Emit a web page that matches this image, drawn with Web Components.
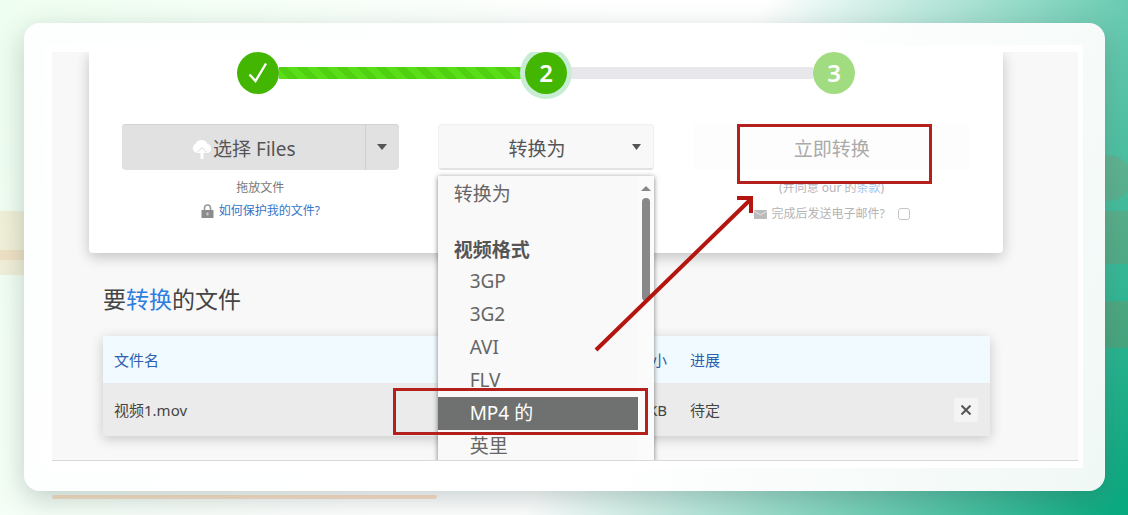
<!DOCTYPE html>
<html lang="zh-CN">
<head>
<meta charset="utf-8">
<title>文件转换</title>
<style>
html, body { margin: 0; min-height: 100%; }
body { font-family: "Noto Sans", "Noto Sans CJK SC", sans-serif; color: #444; }
</style>
</head>
<body>
<page-backdrop>
  <screen-card>
    <convert-panel>
      <step-track slot="steps"></step-track>
      <file-picker></file-picker>
      <format-picker></format-picker>
      <convert-action></convert-action>
    </convert-panel>
    <file-list></file-list>
  </screen-card>
</page-backdrop>
<script>
const define = (name, html) => customElements.define(name, class extends HTMLElement {
  constructor() {
    super();
    this.attachShadow({ mode: "open" }).innerHTML = html;
  }
});

define("page-backdrop", `
<style>
:host {
  display: block; box-sizing: border-box; min-height: 100vh; padding: 23px 23px 23px 24px; position: relative; overflow: hidden;
  background: linear-gradient(115deg, #eefef0 0%, #fff 45%, #fff 56%, #05a87d 100%);
}
.deco { position: absolute; }
.left { left: 0; top: 211px; width: 32px; height: 64px; background: linear-gradient(rgba(240,180,110,.2) 39px, rgba(235,150,80,.28) 39px 49px, rgba(240,180,110,.2) 49px); }
.right { right: 0; top: 211px; width: 32px; height: 137px; background: linear-gradient(rgba(190,110,60,.18) 53px, transparent 53px 90px, rgba(190,110,60,.2) 90px); }
.disc { right: -4px; top: 155px; width: 48px; height: 46px; border-radius: 50%; background: rgba(190,110,60,.16); }
.line { left: 52px; top: 495px; width: 385px; height: 4px; background: rgba(225,160,110,.38); border-radius: 2px; z-index: 2; }
slot { position: relative; display: block; }
</style>
<div class="deco left"></div><div class="deco right"></div><div class="deco disc"></div><div class="deco line"></div>
<slot></slot>`);

define("screen-card", `
<style>
:host {
  display: block; position: relative; padding: 22px 22px 23px 22px; border-radius: 16px;
  background: linear-gradient(115deg, #fdfefe 0%, #fff 60%, #f0f8f6 100%);
  box-shadow: 0 8px 28px rgba(40,70,65,.26);
}
.frame { padding: 7px 5px 7px 6px; background: #fff; }
.shot { overflow: hidden; background: #f8f8f8; border-bottom: 1px solid #d9d9d9; position: relative; }
.arrow { position: absolute; left: 542px; top: 142px; width: 162px; height: 160px; z-index: 5; }
</style>
<div class="frame"><div class="shot">
  <slot></slot>
  <svg class="arrow" viewBox="0 0 162 160" fill="none" stroke="#b4150f" stroke-width="4"><path d="M2 156 157 5"/><path d="M143 4H157V19"/></svg>
</div></div>`);

define("convert-panel", `
<style>
:host {
  display: block; margin: 0 75px 0 37px; padding-bottom: 30px; background: #fff; border-radius: 0 0 4px 4px;
  box-shadow: 0 4px 14px rgba(0,0,0,.22);
}
.cols { display: grid; grid-template-columns: 277fr 217fr 277fr; gap: 39px; padding: 30px 33px 0; align-items: start; }
</style>
<slot name="steps"></slot>
<div class="cols"><slot></slot></div>`);

define("step-track", `
<style>
:host { display: block; padding: 0 148px; }
ol { display: flex; align-items: center; margin: 0; padding: 0; list-style: none; }
.dot {
  box-sizing: border-box; width: 42px; height: 42px; border-radius: 50%; background: #42b600; color: #fff;
  display: flex; align-items: center; justify-content: center; font-size: 24px; line-height: 32px; font-weight: 600; position: relative; z-index: 1;
}
.now { box-shadow: 0 0 0 5px #c9ecd5; }
.later { background: #a2dc80; }
.bar { flex: 1; height: 12px; background: #e8e8ec; }
.done { background: repeating-linear-gradient(45deg, #5ade18 0 7px, #50d010 7px 14px); }
</style>
<ol>
  <li class="dot"><svg width="20" height="24" viewBox="0 0 20 24" fill="none" stroke="#fff" stroke-width="2.4"><path d="M1.500 13.500 7.500 20 18 2.500"/></svg></li>
  <li class="bar done"></li><li class="dot now">2</li><li class="bar"></li><li class="dot later">3</li>
</ol>`);

define("file-picker", `
<style>
:host { display: block; text-align: center; }
.split { display: flex; height: 46px; background: #e1e1e1; border-radius: 4px; box-shadow: inset 0 1px 1px #d2d2d2; }
button { border: 0; background: none; font: inherit; color: #555; padding: 0; display: flex; align-items: center; justify-content: center; }
.main { flex: 1; font-size: 19px; line-height: 28px; padding-top: 4px; }
.more { width: 34px; border-left: 1px solid #d0d0d0; }
p { margin: 9px 0 0; font-size: 12px; line-height: 18px; color: #777; }
.safe { display: flex; align-items: center; justify-content: center; gap: 5px; margin-top: 5px; }
a { color: #3474cc; text-decoration: none; }
</style>
<div class="split">
  <button class="main"><svg width="22" height="22" viewBox="0 0 22 22"><path fill="#fff" d="M5 15a5 5 0 0 1-.5-9A6.500 6.500 0 0 1 16.500 6 4.700 4.700 0 0 1 17 15h-2l-4-5-4 5z"/><path fill="#fff" d="M11 10.500 6.500 15H9.500v6h3v-6h3z"/><path d="m6 14.500 5-5 5 5" fill="none" stroke="#dcdcdc"/></svg>选择 Files</button>
  <button class="more" aria-label="更多来源"><svg width="10" height="6" viewBox="0 0 10 6"><path fill="#555" d="M0 0h10L5 6z"/></svg></button>
</div>
<p>拖放文件</p>
<p class="safe"><svg width="13" height="14" viewBox="0 0 12 14"><path d="M3 7V4a3 3 0 0 1 6 0v3" fill="none" stroke="#999" stroke-width="1.600"/><path fill="#8c8c8c" d="M0 6h12v8H0z"/><path fill="#ccc" d="M5 8.500h2v3H5z"/></svg><a href="#safe">如何保护我的文件?</a></p>`);

define("format-picker", `
<style>
:host { display: block; position: relative; }
.field { position: relative; }
select {
  appearance: none; width: 100%; height: 46px; border: 1px solid #f0f0f0; border-bottom: 2px solid #e2e2e2; border-radius: 4px; background: #f8f8f8;
  font: inherit; font-size: 19px; color: #555; text-align: center; text-align-last: center; padding: 4px 18px 0 0; display: block;
}
.caret { position: absolute; right: 13px; top: 20px; }
.menu {
  position: absolute; top: 52px; left: 0; right: 0; z-index: 3; height: 400px; display: flex;
  background: #f9f9f9; box-shadow: 0 1px 5px rgba(0,0,0,.5); color: #666; font-size: 19px; line-height: 33px;
}
ul { flex: 1; margin: 0; padding: 0; list-style: none; }
li { padding-left: 32px; }
.top { padding: 2px 0 22px 16px; }
.group { padding: 2px 0 0 16px; font-weight: 700; color: #555; line-height: 30px; }
.on { background: #6f7170; color: #fff; position: relative; }
.on::after { content: ""; position: absolute; left: -45px; right: -10px; top: -9px; bottom: -5px; border: 3px solid #b4201c; }
.scroll { width: 16px; padding-top: 10px; display: flex; flex-direction: column; align-items: center; gap: 7px; background: #fbfbfb; }
.thumb { width: 8px; height: 103px; border-radius: 4px; background: #888; }
</style>
<div class="field"><select aria-label="转换为"><option>转换为</option></select>
<svg class="caret" width="9" height="6" viewBox="0 0 9 6"><path fill="#555" d="M0 0h9L4.500 6z"/></svg></div>
<div class="menu">
  <ul role="listbox" aria-label="格式">
    <li class="top" role="option">转换为</li>
    <li class="group" role="presentation">视频格式</li>
    <li role="option">3GP</li><li role="option">3G2</li><li role="option">AVI</li><li role="option">FLV</li>
    <li role="option" class="on" aria-selected="true">MP4 的</li><li role="option">英里</li>
  </ul>
  <div class="scroll"><svg width="10" height="5" viewBox="0 0 10 5"><path fill="#888" d="M5 0l5 5H0z"/></svg><div class="thumb"></div></div>
</div>`);

define("convert-action", `
<style>
:host { display: block; text-align: center; }
.wrap { position: relative; }
.wrap::after { content: ""; position: absolute; left: 44px; right: 38px; top: 0; bottom: -14px; border: 3px solid #b4201c; pointer-events: none; }
button { width: 100%; height: 46px; border: 0; border-radius: 4px; background: #fdfdfd; font: inherit; font-size: 19px; line-height: 50px; color: #aaa; padding: 0; display: block; }
p { margin: 9px 0 0; font-size: 12px; line-height: 18px; color: #b4b4bc; }
a { color: #a3c2ec; text-decoration: none; }
.mail { display: flex; justify-content: center; align-items: center; gap: 5px; margin-top: 8px; color: #b4b4b4; }
input { appearance: none; width: 12px; height: 12px; margin: 0 0 0 8px; border: 1px solid #c4c4c4; border-radius: 3px; background: #fff; }
</style>
<div class="wrap"><button>立即转换</button></div>
<p>(并同意 our 的<a href="#terms">条款</a>)</p>
<p class="mail"><svg width="13" height="9" viewBox="0 0 13 9"><path fill="#bbb" d="M0 0h13v9H0z"/><path d="m0 1 6.500 4L13 1" fill="none" stroke="#e4e4e4"/></svg><label for="mail">完成后发送电子邮件?</label><input type="checkbox" id="mail"></p>`);

define("file-list", `
<style>
:host { display: block; padding: 28px 88px 24px 51px; }
h2 { margin: 0 0 19px; font-size: 23px; line-height: 36px; font-weight: 400; color: #444; }
h2 a { color: #2f7de0; text-decoration: none; }
table { width: 100%; border-collapse: collapse; table-layout: fixed; font-size: 15px; line-height: 22px; box-shadow: 0 3px 12px rgba(0,0,0,.2); }
th, td { padding: 0 0 0 11px; text-align: left; font-weight: 400; }
th { height: 47px; background: #f0faff; color: #2c5fae; }
td { height: 53px; background: #ebebeb; color: #444; }
th:nth-child(2), td:nth-child(2) { width: 110px; padding-right: 12px; text-align: right; }
th:nth-child(3), td:nth-child(3) { width: 264px; }
th:last-child, td:last-child { width: 36px; padding: 0; }
button { display: flex; align-items: center; justify-content: center; width: 24px; height: 24px; border: 0; border-radius: 3px; padding: 0; background: #f4f4f4; }
</style>
<h2>要<a href="#convert">转换</a>的文件</h2>
<table>
  <thead><tr><th>文件名</th><th>大小</th><th>进展</th><th></th></tr></thead>
  <tbody><tr><td>视频1.mov</td><td>KB</td><td>待定</td><td><button aria-label="删除"><svg width="10" height="10" viewBox="0 0 10 10" fill="none" stroke="#555" stroke-width="2"><path d="m0.500 0.500 9 9m0-9-9 9"/></svg></button></td></tr></tbody>
</table>`);
</script>
</body>
</html>
